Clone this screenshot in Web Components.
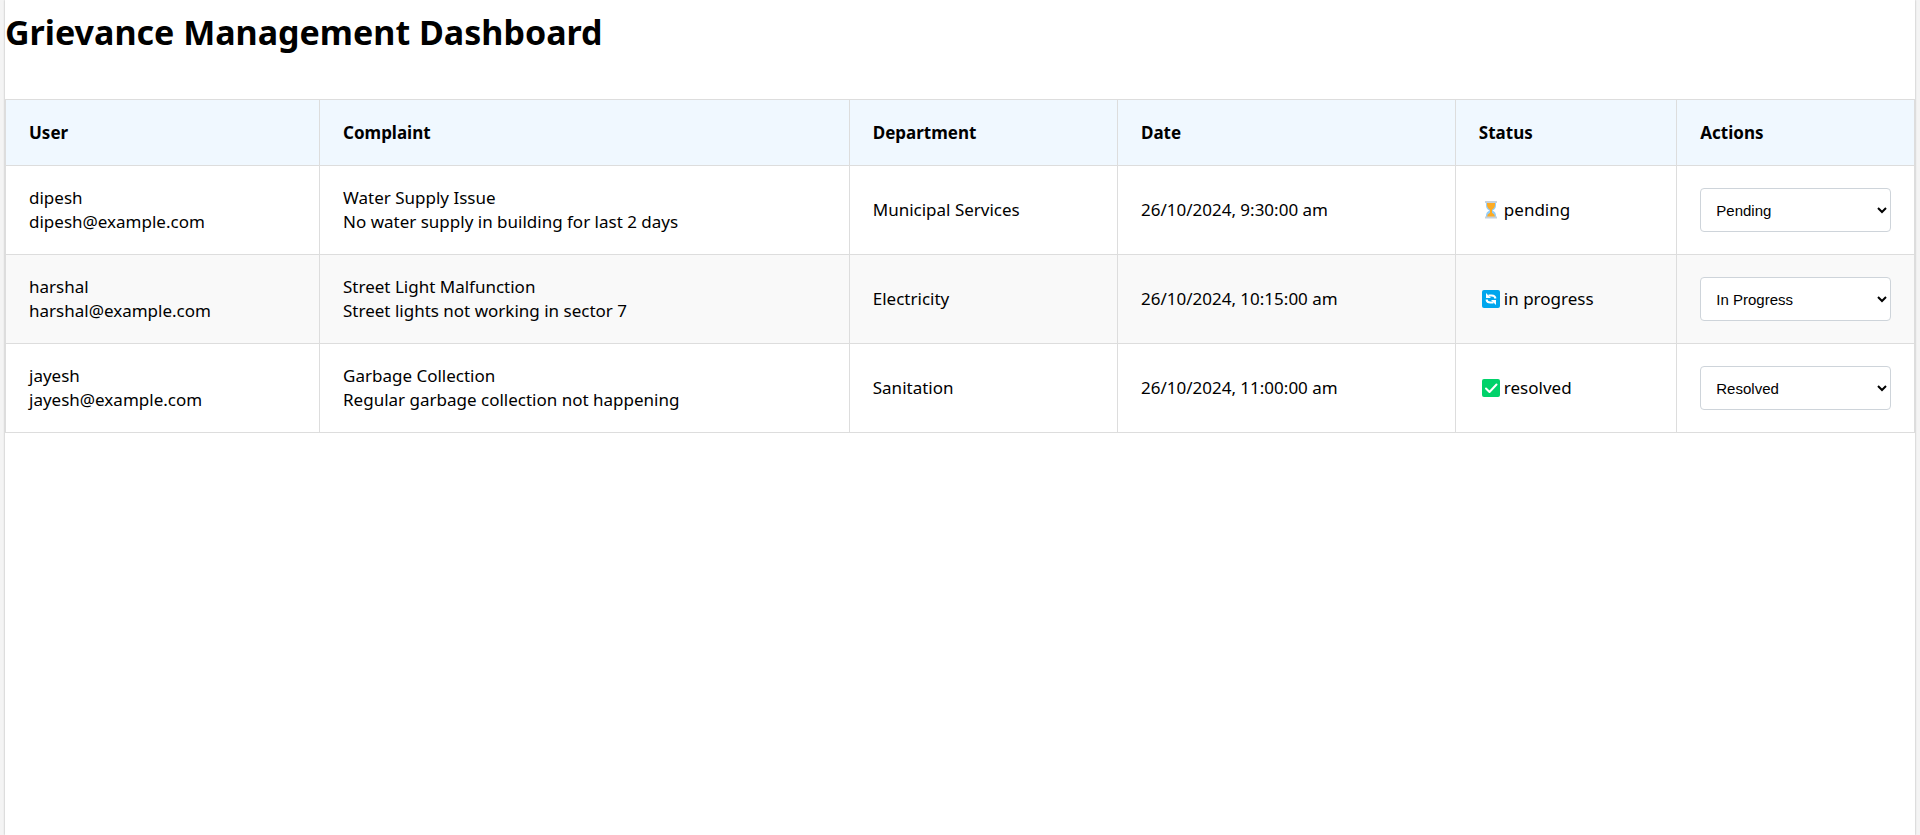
<!DOCTYPE html>
<html lang="en">
<head>
<meta charset="utf-8">
<title>Grievance Management Dashboard</title>
<style>
  html { background: #f4f4f4; }
  body { margin: 0; font-family: "Segoe UI", "Noto Sans", sans-serif; font-size: 17px; line-height: 24px; color: #000; }
</style>
</head>
<body>
<grievance-dashboard></grievance-dashboard>

<template id="dashboard-template">
  <style>
    :host { display: block; box-sizing: border-box; min-height: 100vh; margin: 0 5px; background: #fff; box-shadow: 0 0 2px rgba(0, 0, 0, 0.3); }
    h1 { margin: 0; padding: 8px 0 43px; font-size: 34px; line-height: 48px; font-weight: 700; }
  </style>
  <h1>Grievance Management Dashboard</h1>
  <grievance-table></grievance-table>
</template>

<template id="table-template">
  <style>
    :host { display: block; }
    table { width: 100%; border-collapse: collapse; table-layout: fixed; }
    th, td { border: 1px solid #ddd; padding: 20px 23px; text-align: left; vertical-align: middle; }
    th { background: #f0f8ff; font-weight: 700; padding-top: 21px; }
    tbody tr:nth-child(even) { background: #f9f9f9; }
    td p { margin: 0; }
    .user { width: 16.45%; }
    .complaint { width: 27.75%; }
    .department { width: 14.05%; }
    .date { width: 17.7%; }
    .status { width: 11.6%; }
  </style>
  <table>
    <colgroup>
      <col class="user"><col class="complaint"><col class="department"><col class="date"><col class="status"><col>
    </colgroup>
    <thead>
      <tr>
        <th scope="col">User</th><th scope="col">Complaint</th><th scope="col">Department</th>
        <th scope="col">Date</th><th scope="col">Status</th><th scope="col">Actions</th>
      </tr>
    </thead>
    <tbody></tbody>
  </table>
</template>

<template id="status-template">
  <style>
    :host { display: flex; align-items: center; gap: 3px; }
    #icon { display: contents; }
    svg { flex: none; width: 22px; height: 22px; }
  </style>
  <span id="icon"></span><slot></slot>
</template>

<template id="select-template">
  <style>
    :host { display: block; }
    select { display: block; box-sizing: border-box; width: 100%; height: 44px; padding: 0 11px; border: 1px solid #ced4da; border-radius: 4px; background-color: #fff; color: #000; font-family: "Liberation Sans", Arial, sans-serif; font-size: 15px; }
  </style>
  <select aria-label="Change status">
    <option value="pending">Pending</option>
    <option value="in progress">In Progress</option>
    <option value="resolved">Resolved</option>
  </select>
</template>

<script>
  const attach = (el, id) => {
    const root = el.attachShadow({ mode: 'open' });
    root.append(document.getElementById(id).content.cloneNode(true));
    return root;
  };

  const grievances = [
    { user: 'dipesh', email: 'dipesh@example.com', title: 'Water Supply Issue', text: 'No water supply in building for last 2 days', department: 'Municipal Services', date: '26/10/2024, 9:30:00 am', status: 'pending' },
    { user: 'harshal', email: 'harshal@example.com', title: 'Street Light Malfunction', text: 'Street lights not working in sector 7', department: 'Electricity', date: '26/10/2024, 10:15:00 am', status: 'in progress' },
    { user: 'jayesh', email: 'jayesh@example.com', title: 'Garbage Collection', text: 'Regular garbage collection not happening', department: 'Sanitation', date: '26/10/2024, 11:00:00 am', status: 'resolved' }
  ];

  const icons = {
    'pending': `<svg viewBox="0 0 22 22" aria-hidden="true">
      <path fill="#93cdf8" d="M7 4h10v2.500q0 3.500-3.500 5 3.500 1.500 3.500 5V18H7v-1.500q0-3.500 3.500-5Q7 10 7 6.500z"/>
      <path fill="#fcab24" d="M8 4h8v1.500q0 3.500-3 5.300v3Q16 15.200 16 18H8q0-2.800 3-4.200v-3Q8 9 8 5.500z"/>
      <path fill="#c5d1dc" d="M6 2h12v2H6zM6 17.500h12v2H6z"/></svg>`,
    'in progress': `<svg viewBox="0 0 22 22" aria-hidden="true">
      <rect x="3" y="2" width="18" height="18" rx="2" fill="#00a6ed"/>
      <path fill="none" stroke="#fff" stroke-width="2" d="M9.500 7.500h3.200q3.300 0 3.800 3M14.500 14.500h-3.200q-3.300 0-3.800-3"/>
      <path fill="#fff" d="M7 5v5h5zM17 17v-5h-5z"/></svg>`,
    'resolved': `<svg viewBox="0 0 22 22" aria-hidden="true">
      <rect x="3" y="2" width="18" height="18" rx="2" fill="#00d26a"/>
      <path fill="none" stroke="#fff" stroke-width="2" stroke-linecap="round" stroke-linejoin="round" d="M7 11.500l3.500 3.500L17.500 7.500"/></svg>`
  };

  customElements.define('status-label', class extends HTMLElement {
    constructor() { super(); this.view = attach(this, 'status-template'); }
    connectedCallback() { this.view.getElementById('icon').innerHTML = icons[this.getAttribute('status')]; }
  });

  customElements.define('status-select', class extends HTMLElement {
    constructor() { super(); this.view = attach(this, 'select-template'); }
    connectedCallback() { this.view.querySelector('select').value = this.getAttribute('value'); }
  });

  customElements.define('grievance-table', class extends HTMLElement {
    constructor() {
      super();
      attach(this, 'table-template').querySelector('tbody').innerHTML = grievances.map(g => `
        <tr>
          <td><p>${g.user}</p><p>${g.email}</p></td>
          <td><p>${g.title}</p><p>${g.text}</p></td>
          <td>${g.department}</td>
          <td>${g.date}</td>
          <td><status-label status="${g.status}">${g.status}</status-label></td>
          <td><status-select value="${g.status}"></status-select></td>
        </tr>`).join('');
    }
  });

  customElements.define('grievance-dashboard', class extends HTMLElement {
    constructor() { super(); attach(this, 'dashboard-template'); }
  });
</script>
</body>
</html>
